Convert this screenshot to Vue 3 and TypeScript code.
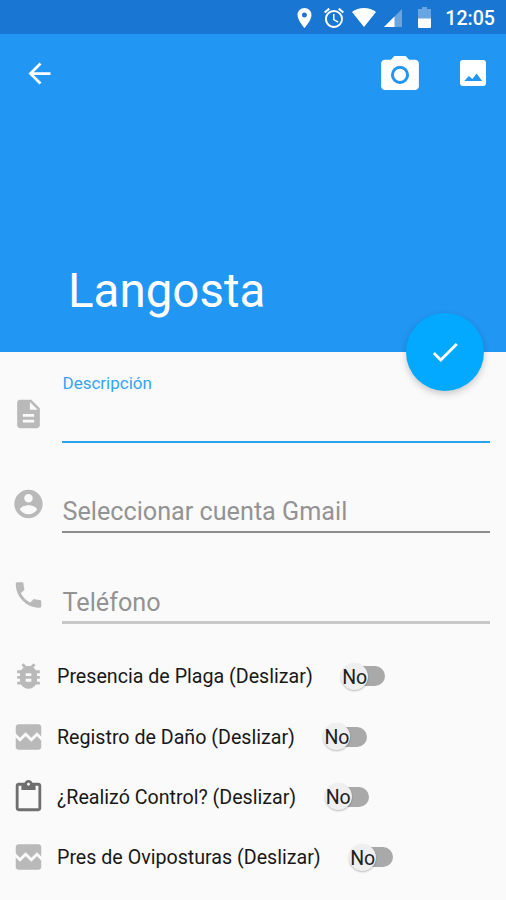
<script setup lang="ts">
import { ref } from 'vue'

interface Field {
  id: string
  label: string
  icon: string
  state: 'focused' | 'idle' | 'light'
}

interface Toggle {
  id: string
  label: string
  icon: string
  dark?: boolean
  on: boolean
}

const icons: Record<string, string> = {
  document: 'M14 2H6c-1.1 0-1.99.9-1.99 2L4 20c0 1.1.89 2 1.99 2H18c1.1 0 2-.9 2-2V8l-6-6zm2 16H8v-2h8v2zm0-4H8v-2h8v2zm-3-5V3.5L18.500 9H13z',
  account: 'M12 2C6.48 2 2 6.48 2 12s4.48 10 10 10 10-4.480 10-10S17.520 2 12 2zm0 3c1.660 0 3 1.340 3 3s-1.340 3-3 3-3-1.340-3-3 1.340-3 3-3zm0 14.200c-2.500 0-4.710-1.280-6-3.220.030-1.990 4-3.080 6-3.080 1.990 0 5.970 1.090 6 3.080-1.290 1.940-3.500 3.220-6 3.220z',
  phone: 'M6.620 10.790c1.440 2.830 3.760 5.140 6.590 6.590l2.200-2.200c.270-.270.670-.360 1.020-.240 1.120.370 2.330.570 3.570.570.550 0 1 .450 1 1V20c0 .550-.450 1-1 1-9.390 0-17-7.610-17-17 0-.550.450-1 1-1h3.500c.550 0 1 .450 1 1 0 1.250.200 2.450.570 3.570.110.350.030.740-.250 1.020l-2.200 2.200z',
  bug: 'M20 8h-2.810c-.450-.780-1.070-1.450-1.820-1.960L17 4.410 15.590 3l-2.170 2.170C12.960 5.060 12.490 5 12 5s-.960.060-1.410.170L8.410 3 7 4.410l1.620 1.630C7.880 6.550 7.260 7.220 6.810 8H4v2h2.090c-.050.330-.090.660-.090 1v1H4v2h2v1c0 .340.040.670.090 1H4v2h2.810c1.040 1.790 2.970 3 5.190 3s4.150-1.210 5.190-3H20v-2h-2.090c.050-.330.090-.660.090-1v-1h2v-2h-2v-1c0-.340-.040-.670-.090-1H20V8zm-6 8h-4v-2h4v2zm0-4h-4v-2h4v2z',
  broken: 'M21 5v6.590l-3-3.010-4 4.010-4-4-4 4-3-3.010V5c0-1.100.900-2 2-2h14c1.100 0 2 .900 2 2zm-3 6.420l3 3.010V19c0 1.100-.900 2-2 2H5c-1.100 0-2-.900-2-2v-6.580l3 2.990 4-4 4 4 4-3.990z',
  clipboard: 'M19 2h-4.180C14.400.840 13.300 0 12 0c-1.300 0-2.400.840-2.820 2H5c-1.100 0-2 .900-2 2v16c0 1.100.900 2 2 2h14c1.100 0 2-.900 2-2V4c0-1.100-.900-2-2-2zm-7 0c.550 0 1 .450 1 1s-.450 1-1 1-1-.450-1-1 .450-1 1-1zm7 18H5V4h2v3h10V4h2v16z',
}

const fields = ref<Field[]>([
  { id: 'descripcion', label: 'Descripción', icon: 'document', state: 'focused' },
  { id: 'cuenta', label: 'Seleccionar cuenta Gmail', icon: 'account', state: 'idle' },
  { id: 'telefono', label: 'Teléfono', icon: 'phone', state: 'light' },
])

const toggles = ref<Toggle[]>([
  { id: 'plaga', label: 'Presencia de Plaga (Deslizar)', icon: 'bug', on: false },
  { id: 'dano', label: 'Registro de Daño (Deslizar)', icon: 'broken', on: false },
  { id: 'control', label: '¿Realizó Control? (Deslizar)', icon: 'clipboard', dark: true, on: false },
  { id: 'oviposturas', label: 'Pres de Oviposturas (Deslizar)', icon: 'broken', on: false },
])
</script>

<template>
  <main class="screen">
    <div class="status">
      <svg class="pin" viewBox="5 2 14 20"><path d="M12 2C8.130 2 5 5.130 5 9c0 5.250 7 13 7 13s7-7.750 7-13c0-3.870-3.130-7-7-7zm0 9.500a2.500 2.500 0 1 1 0-5 2.500 2.500 0 0 1 0 5z" /></svg>
      <svg class="alarm" viewBox="2 2 20 20"><path d="M22 5.720l-4.600-3.860-1.290 1.530 4.600 3.860L22 5.720zM7.880 3.390L6.600 1.860 2 5.710l1.290 1.530 4.590-3.850zM12.500 8H11v6l4.750 2.850.750-1.230-4-2.370V8zM12 4c-4.970 0-9 4.030-9 9s4.020 9 9 9a9 9 0 1 0 0-18zm0 16c-3.870 0-7-3.130-7-7s3.130-7 7-7 7 3.130 7 7-3.130 7-7 7z" /></svg>
      <svg class="wifi" viewBox="0 0 24 19"><path d="M12 19L24 4C20.500 1.300 16.500 0 12 0S3.500 1.300 0 4z" /></svg>
      <svg class="signal" viewBox="0 0 18 18"><path class="faint" d="M18 0V18H0z" /><path d="M10.500 7.500V18H0z" /></svg>
      <svg class="battery" viewBox="0 0 13 21"><path class="faint" d="M4 0h5v2h4v10H0V2h4z" /><path d="M0 11.500h13V20q0 1-1 1H1q-1 0-1-1z" /></svg>
      <span class="clock">12:05</span>
    </div>

    <header class="header">
      <nav class="toolbar">
        <button class="tool" aria-label="Atrás">
          <svg class="back" viewBox="0 0 24 24"><path d="M20 11H7.830l5.590-5.590L12 4l-8 8 8 8 1.410-1.410L7.830 13H20v-2z" /></svg>
        </button>
        <span class="spacer"></span>
        <button class="tool" aria-label="Cámara">
          <svg class="camera" viewBox="2 2 20 18"><path fill-rule="evenodd" d="M9 2L7.170 4H4c-1.100 0-2 .900-2 2v12c0 1.100.900 2 2 2h16c1.100 0 2-.900 2-2V6c0-1.100-.900-2-2-2h-3.170L15 2H9zm3 5.200a4.800 4.800 0 1 1 0 9.600 4.800 4.800 0 0 1 0-9.600zm0 1.600a3.200 3.200 0 1 0 0 6.400 3.200 3.200 0 0 0 0-6.400z" /></svg>
        </button>
        <button class="tool" aria-label="Galería">
          <svg class="gallery" viewBox="3 3 18 18"><path fill-rule="evenodd" d="M5 3h14q2 0 2 2v14q0 2-2 2H5q-2 0-2-2V5q0-2 2-2zM6 17.500h12.300l-3.800-5.100-2.900 3.700-2.500-2z" /></svg>
        </button>
      </nav>
      <h1 class="title">Langosta</h1>
      <button class="fab" aria-label="Guardar">
        <svg viewBox="0 0 24 24"><path d="M9 16.170L4.830 12l-1.420 1.410L9 19 21 7l-1.410-1.410z" /></svg>
      </button>
    </header>

    <form class="form" @submit.prevent>
      <div v-for="f in fields" :key="f.id" class="field" :class="f.state">
        <svg class="icon" viewBox="0 0 24 24"><path :d="icons[f.icon]" /></svg>
        <label class="box"><span class="hint">{{ f.label }}</span></label>
      </div>

      <div v-for="t in toggles" :key="t.id" class="toggle">
        <svg class="icon" :class="{ dark: t.dark }" viewBox="0 0 24 24"><path :d="icons[t.icon]" /></svg>
        <span class="label">{{ t.label }}</span>
        <button type="button" class="switch" role="switch" :aria-checked="t.on">
          <span class="thumb">No</span>
        </button>
      </div>
    </form>
  </main>
</template>

<style>
body {
  background: #fafafa;
}
</style>

<style scoped>
.screen {
  width: 506px;
  height: 900px;
  overflow: hidden;
  background: #fafafa;
  font-family: Roboto, "Liberation Sans", sans-serif;
}

svg {
  display: block;
  flex: none;
  fill: currentColor;
}

button {
  padding: 0;
  border: 0;
  background: none;
  color: inherit;
  font: inherit;
}

.status {
  display: flex;
  align-items: center;
  box-sizing: border-box;
  height: 34px;
  padding: 1px 11px 0 297px;
  background: #1976d2;
  color: #fff;
}

.pin { width: 15px; height: 20px; }
.alarm { width: 20px; height: 20px; margin-left: 12px; }
.wifi { width: 24px; height: 19px; margin-left: 8px; }
.signal { width: 18px; height: 18px; margin-left: 8px; }
.battery { width: 13px; height: 21px; margin-left: 16px; }
.faint { opacity: 0.35; }

.clock {
  margin-left: auto;
  padding-top: 2px;
  font-size: 19.6px;
  line-height: 32px;
  font-weight: 500;
}

.header {
  position: relative;
  height: 318px;
  background: #2196f3;
  color: #fff;
}

.toolbar {
  display: flex;
  align-items: center;
  height: 78px;
  padding: 0 20px 0 23px;
}

.spacer { flex: 1; }
.back { width: 33px; height: 33px; }
.camera { width: 38px; height: 34px; margin-right: 41px; }
.gallery { width: 26px; height: 26px; }

.title {
  margin: 123px 0 0 68px;
  font-size: 47.5px;
  line-height: 112px;
  font-weight: 400;
}

.fab {
  position: absolute;
  right: 22px;
  bottom: -39px;
  display: grid;
  place-items: center;
  width: 78px;
  height: 78px;
  border-radius: 50%;
  background: #03a9ff;
  box-shadow: 0 3px 7px rgba(0, 0, 0, 0.2);
}

.fab svg { width: 34px; height: 34px; }

.form {
  padding: 1px 16px 0 11px;
}

.icon {
  width: 34px;
  height: 34px;
  margin-right: 17px;
  color: #b9b9b9;
}

.icon path { transform: translateX(0.35px); }

.icon.dark { color: #6f6f6f; }

.field {
  display: flex;
  align-items: flex-end;
  height: 90px;
}

.field .icon { margin-bottom: 12px; }

.box {
  box-sizing: border-box;
  flex: 1;
  height: 60px;
  padding-top: 24px;
  border-bottom: 2px solid #8c8c8c;
  color: #939393;
  font-size: 25.2px;
  line-height: 30px;
}

.hint {
  display: block;
  padding-left: 0.5px;
}

.light { height: 91px; }

.light .box {
  border-bottom: 3px solid #c8c8c8;
}

.focused .box {
  height: 72px;
  padding-top: 1px;
  border-color: #29a4ea;
  color: #32a5f5;
  font-size: 17px;
  line-height: 23px;
}

.toggle {
  display: flex;
  align-items: center;
  height: 60.4px;
}

.field + .toggle { margin-top: 22px; }

.toggle .icon { margin-right: 12px; }

.label {
  padding-top: 2px;
  color: #181818;
  font-size: 19.65px;
  line-height: 28px;
  white-space: nowrap;
}

.switch {
  display: flex;
  align-items: center;
  width: 37px;
  height: 20px;
  margin-left: 35.5px;
  border-radius: 10px;
  background: #a9a9a9;
}

.thumb {
  flex: none;
  width: 27px;
  height: 27px;
  margin-left: -7px;
  border-radius: 50%;
  background: #efefef;
  box-shadow: 0 1px 2px rgba(0, 0, 0, 0.25);
  color: #202020;
  font-size: 19.5px;
  line-height: 29px;
  text-align: center;
}
</style>
